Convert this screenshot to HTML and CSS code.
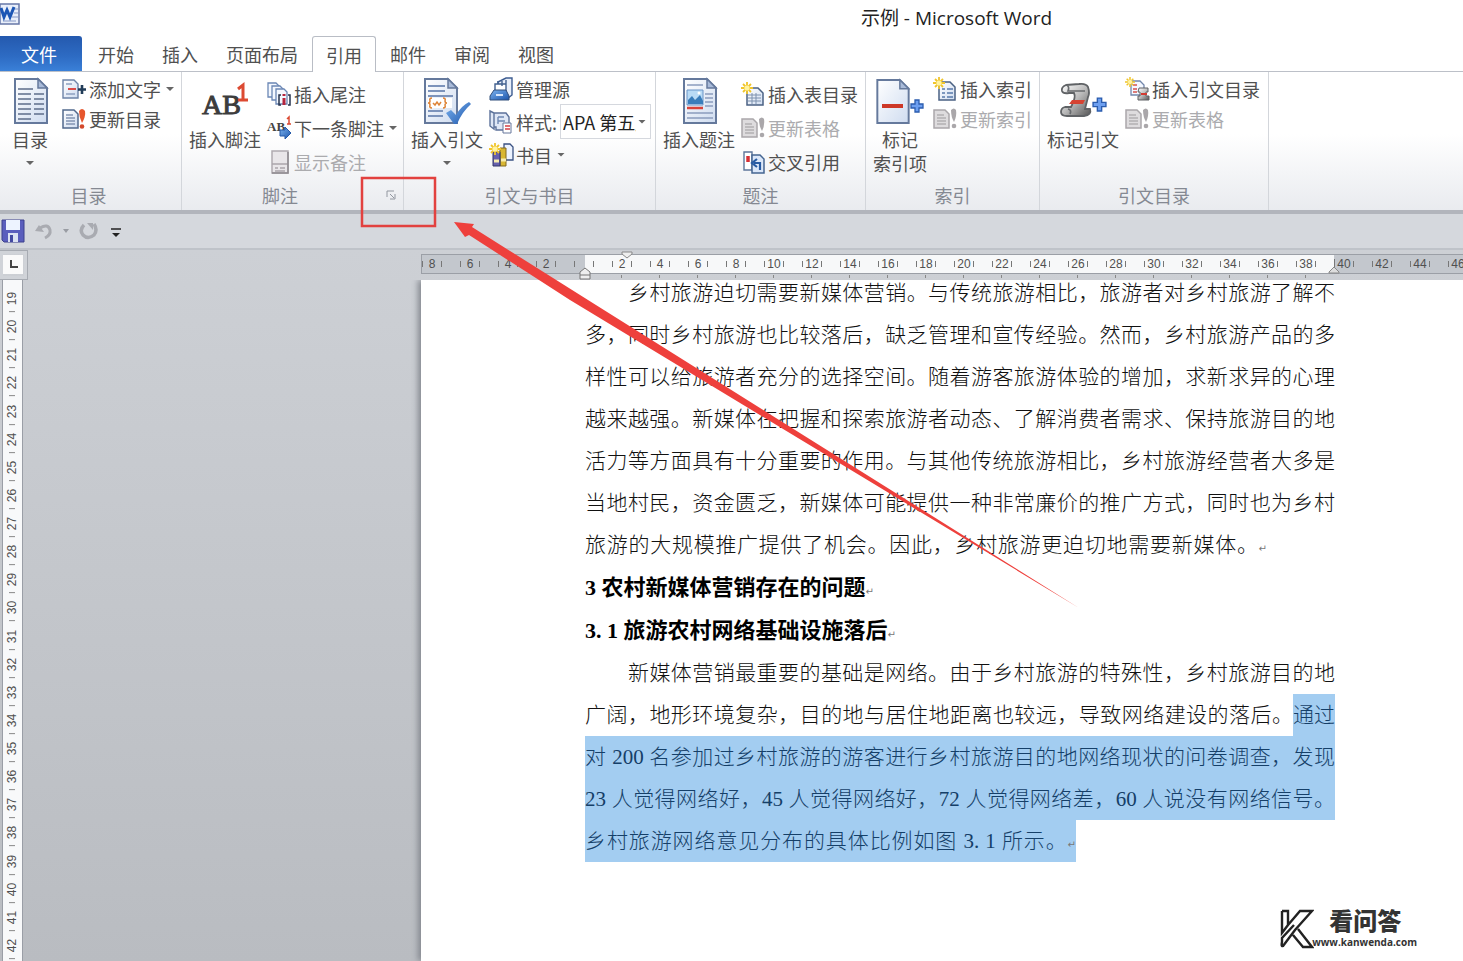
FILE: index.html
```
<!DOCTYPE html>
<html lang="zh-CN">
<head>
<meta charset="utf-8">
<title>示例 - Microsoft Word</title>
<link rel="stylesheet" href="styles.css">
</head>
<body>
<svg class="defs" width="0" height="0" aria-hidden="true">
  <defs>
    <linearGradient id="paper" x1="0" y1="0" x2="1" y2="1"><stop offset="0" stop-color="#fff"/><stop offset="1" stop-color="#cfdcf0"/></linearGradient>
    <linearGradient id="steel" x1="0" y1="0" x2="1" y2="1"><stop offset="0" stop-color="#fff"/><stop offset=".5" stop-color="#bbb"/><stop offset="1" stop-color="#555"/></linearGradient>
    <linearGradient id="blue" x1="0" y1="0" x2="1" y2="1"><stop offset="0" stop-color="#7db4f0"/><stop offset="1" stop-color="#1c55ab"/></linearGradient>
    <symbol id="page" viewBox="0 0 36 48"><path d="M2 2H25L34 11V46H2Z" fill="url(#paper)" stroke="#65799c" stroke-width="2"/><path d="M25 2V11H34Z" fill="#a9bbd9" stroke="#65799c" stroke-width="1.5"/></symbol>
    <symbol id="spark" viewBox="0 0 12 12"><path d="M6 0V12M0 6H12M2 2L10 10M10 2L2 10" stroke="#f0c52b" stroke-width="1.8"/><circle cx="6" cy="6" r="2.6" fill="#fff3a0"/></symbol>
    <symbol id="plus" viewBox="0 0 14 14"><path d="M5 1H9V5H13V9H9V13H5V9H1V5H5Z" fill="#6d9ff0" stroke="#2b5cae" stroke-width="1.3"/></symbol>
    <symbol id="update-off" viewBox="0 0 24 24"><path d="M1 3H12L16 7V21H1Z" fill="#dedcde" stroke="#aaa7aa" stroke-width="1.5"/><path d="M4 8H11M4 11H13M4 14H13M4 17H13" stroke="#b3b0b3" stroke-width="1.4"/><path d="M18 3Q21 0 23 3Q24 9 21 15Q18 10 18 3Z" fill="#aaa7aa"/><circle cx="21" cy="19" r="2.3" fill="#aaa7aa"/></symbol>
  </defs>
</svg>

<header class="titlebar">
  <svg class="app-icon" viewBox="0 0 21 22" aria-hidden="true"><path d="M0 1H19V21H0Z" fill="#e9effa" stroke="#6778a8" stroke-width="1.5"/><path d="M14 6H18M14 10H18M12 14H18M3 18H16" stroke="#a8b7d8" stroke-width="1.5"/><path d="M1 5L4 14L7 7L10 14L14 4" fill="none" stroke="#1d57b5" stroke-width="3"/></svg>
  <h1>示例 - Microsoft Word</h1>
</header>

<nav class="tabs" aria-label="功能区">
  <button class="tab tab-file">文件</button>
  <button class="tab">开始</button>
  <button class="tab">插入</button>
  <button class="tab">页面布局</button>
  <button class="tab tab-active">引用</button>
  <button class="tab">邮件</button>
  <button class="tab">审阅</button>
  <button class="tab">视图</button>
</nav>

<section class="ribbon">
  <div class="group g-toc">
    <div class="tools">
      <button class="big"><svg viewBox="0 0 48 48"><use href="#page" x="7" width="36" height="48"/><path d="M12 12H27M12 17H25M12 22H25M12 27H25M12 32H25M12 37H25M12 42H25M28 17H38M28 22H38M28 27H38M28 32H38M28 37H38" stroke="#5e6e8b" stroke-width="1.6"/></svg><span>目录</span><i class="caret"></i></button>
      <div class="stack rows-30">
        <button class="small"><svg viewBox="0 0 24 24"><path d="M1 3H12L16 7V21H1Z" fill="url(#paper)" stroke="#6e84a8" stroke-width="1.4"/><path d="M4 7H10M4 17H13" stroke="#8da0c0" stroke-width="1.3"/><path d="M6 12H14" stroke="#d83a35" stroke-width="1.8"/><path d="M20 8V17M16 12.500H24" stroke="#213c58" stroke-width="2.600"/></svg><span>添加文字</span><i class="caret"></i></button>
        <button class="small"><svg viewBox="0 0 24 24"><path d="M1 3H12L16 7V21H1Z" fill="url(#paper)" stroke="#52698d" stroke-width="1.5"/><path d="M4 8H11M4 11H13M4 14H13M4 17H13" stroke="#8294b2" stroke-width="1.3"/><path d="M17 4Q20 0 23 4Q24 9 20 16Q17 10 17 4Z" fill="#e6562d"/><circle cx="20" cy="19.500" r="2.300" fill="#d3482b"/></svg><span>更新目录</span></button>
      </div>
    </div>
    <h2>目录</h2>
  </div>

  <div class="group g-notes">
    <div class="tools">
      <button class="big"><svg viewBox="0 0 48 48"><text x="1" y="37" class="ico-ab">AB</text><path d="M37 12L42 8V23M37 23H47" fill="none" stroke="#dc4a32" stroke-width="3"/></svg><span>插入脚注</span></button>
      <div class="stack rows-34">
        <button class="small"><svg viewBox="0 0 24 24"><path d="M1 1H9L12 4V15H1Z" fill="#f4f8ff" stroke="#6b87b5" stroke-width="1.3"/><path d="M5 4H13L16 7V18H5Z" fill="#f4f8ff" stroke="#6b87b5" stroke-width="1.3"/><path d="M9 7H17L20 10V22H9Z" fill="#f4f8ff" stroke="#6b87b5" stroke-width="1.3"/><path d="M14 13H12V23H14M21 13H23V23H21" fill="none" stroke="#26334e" stroke-width="1.500"/><path d="M17 12V14M17 16V23" stroke="#b5243c" stroke-width="3"/></svg><span>插入尾注</span></button>
        <button class="small"><svg viewBox="0 0 24 24"><text x="0" y="15" class="ico-ab-s">AB</text><path d="M20 3L22 1V8M20 8H24" fill="none" stroke="#dc4a32" stroke-width="1.500"/><path d="M13 14H18V11L24 17L18 23V20H13Z" fill="url(#blue)" stroke="#2559a8"/></svg><span>下一条脚注</span><i class="caret"></i></button>
        <button class="small" disabled><svg viewBox="0 0 24 24"><path d="M5 1H21V23H5Z" fill="#e9e6e9" stroke="#b0abb0" stroke-width="1.500"/><path d="M5 14H21M8 18H11M13 18H18M8 21H18" stroke="#aaa5aa" stroke-width="1.500"/><path d="M21 2V23H5" fill="none" stroke="#8f8b90" stroke-width="1.500"/></svg><span>显示备注</span></button>
      </div>
    </div>
    <h2>脚注</h2>
    <button class="launcher" aria-label="脚注和尾注"><svg viewBox="0 0 10 10"><path d="M1 7V1H8" fill="none" stroke="#9297a0"/><path d="M4 4L8 8M9 4V9H4" fill="none" stroke="#9297a0"/></svg></button>
  </div>

  <div class="group g-cite">
    <div class="tools">
      <button class="big"><svg viewBox="0 0 48 48"><use href="#page" x="0" width="36" height="48"/><path d="M5 9H22M5 14H22M5 19H30M5 34H20M5 39H20M24 26H29" stroke="#7c93bb" stroke-width="1.800"/><path d="M5 21H29V31H5Z" fill="#fff"/><path d="M9 21Q6 21 7 24Q7 26 5 26Q7 26 7 28Q6 31 9 31M20 21Q23 21 22 24Q22 26 24 26Q22 26 22 28Q23 31 20 31M10 26L12 28L14 25L16 28L18 25" fill="none" stroke="#de8438" stroke-width="1.500"/><path d="M23 36L28 33L33 38Q38 29 46 25L48 27Q39 35 34 47L31 47Z" fill="url(#blue)"/></svg><span>插入引文</span><i class="caret"></i></button>
      <div class="stack rows-33">
        <button class="small"><svg viewBox="0 0 24 24"><path d="M9 5L17 1H23V18L18 22H9Z" fill="#e8effa" stroke="#3e5d91" stroke-width="1.400"/><path d="M6 7H17V16H6ZM9 4V7M13 4V9M17 3V9" fill="#fff" stroke="#40608f" stroke-width="1.400"/><path d="M1 19L5 13H17L20 19V23H1Z" fill="url(#blue)" stroke="#304e7b"/><path d="M7 18H14" stroke="#d9e7fa" stroke-width="2"/></svg><span>管理源</span></button>
        <div class="small"><svg viewBox="0 0 24 24"><path d="M1 1L5 3V19L1 16ZM5 3H17L20 7V20H7V17H5Z" fill="#dfe7f6" stroke="#5d729b" stroke-width="1.400"/><path d="M9 7H15M9 11H16M9 7V14" stroke="#6f88b3" stroke-width="1.400"/><path d="M14 13H22V23H14Z" fill="#fff" stroke="#66779b"/><path d="M16 16H21M16 19H21" stroke="#d53f45" stroke-width="1.500"/></svg><label for="style">样式:</label><span class="combo"><select id="style"><option>APA 第五版</option></select><i class="caret"></i></span></div>
        <button class="small"><svg viewBox="0 0 24 24"><path d="M15 1H21L24 4V17H15Z" fill="#edf3ff" stroke="#3a5282" stroke-width="1.300"/><path d="M11 5H17V23H11Z" fill="#d8b632" stroke="#806820"/><path d="M4 9H11V23H4Z" fill="#6761ad" stroke="#333768"/><path d="M5 18H10M12 17H17" stroke="#f8edae" stroke-width="3"/><use href="#spark" x="0" y="0" width="12" height="12"/></svg><span>书目</span><i class="caret"></i></button>
      </div>
    </div>
    <h2>引文与书目</h2>
  </div>

  <div class="group g-caption">
    <div class="tools">
      <button class="big"><svg viewBox="0 0 48 48"><use href="#page" x="7" width="36" height="48"/><path d="M12 8H28M12 36H38M12 41H38M30 17H38M30 21H38M30 25H38M30 29H38" stroke="#8a9cbd" stroke-width="1.600"/><path d="M12 13H28V28H12Z" fill="#b9dbf6" stroke="#6b95c7"/><path d="M13 27V23L17 19L20 23L25 18L28 24V27Z" fill="#397dbb"/><circle cx="24" cy="16" r="1.500" fill="#fff"/><path d="M12 31H28" stroke="#d8433a" stroke-width="2.500"/></svg><span>插入题注</span></button>
      <div class="stack rows-34">
        <button class="small"><svg viewBox="0 0 24 24"><path d="M6 6H17L22 11V23H6Z" fill="url(#paper)" stroke="#4b6284" stroke-width="1.500"/><path d="M7 13H20M7 16H20M7 19H20M11 11V22M15 11V22" stroke="#7c91ae"/><use href="#spark" width="12" height="12"/></svg><span>插入表目录</span></button>
        <button class="small" disabled><svg viewBox="0 0 24 24"><use href="#update-off" width="24" height="24"/></svg><span>更新表格</span></button>
        <button class="small"><svg viewBox="0 0 24 24"><path d="M3 2H11V20H3Z" fill="#fff" stroke="#5d769b" stroke-width="1.400"/><path d="M7 6V12" stroke="#d72f34" stroke-width="3.500"/><path d="M11 5H19L23 9V23H11Z" fill="#dbe7f9" stroke="#456591" stroke-width="1.500"/><path d="M19 20V13H13M16 9L11 13L16 17" fill="none" stroke="#285ba3" stroke-width="2.200"/></svg><span>交叉引用</span></button>
      </div>
    </div>
    <h2>题注</h2>
  </div>

  <div class="group g-index">
    <div class="tools">
      <button class="big"><svg viewBox="0 0 48 48"><use href="#page" x="-1" y="1" width="36" height="47"/><path d="M6 29H27" stroke="#cd3827" stroke-width="4"/><use href="#plus" x="34" y="22" width="14" height="14"/></svg><span>标记<br>索引项</span></button>
      <div class="stack rows-30">
        <button class="small"><svg viewBox="0 0 24 24"><path d="M6 5H17L22 10V23H6Z" fill="url(#paper)" stroke="#4b6284" stroke-width="1.500"/><path d="M9 12H12M14 12H20M9 16H12M14 16H20M9 20H12M14 20H20" stroke="#5879aa" stroke-width="1.500"/><use href="#spark" width="12" height="12"/></svg><span>插入索引</span></button>
        <button class="small" disabled><svg viewBox="0 0 24 24"><use href="#update-off" width="24" height="24"/></svg><span>更新索引</span></button>
      </div>
    </div>
    <h2>索引</h2>
  </div>

  <div class="group g-auth">
    <div class="tools">
      <button class="big"><svg viewBox="0 0 48 48"><path d="M7 8Q2 10 3 14Q4 17 10 16H15Q17 20 13 28L12 30H6Q2 31 2 35Q2 39 8 39H25Q33 38 31 32H26L29 20Q31 16 29 10Q27 6 20 7Z" fill="url(#steel)" stroke="#606366" stroke-width="1.800"/><path d="M7 8Q11 9 9 14H26M9 32Q13 33 11 37" fill="none" stroke="#686b6e" stroke-width="1.700"/><path d="M13 23H26L24 27H10Z" fill="#d64332"/><use href="#plus" x="33" y="20" width="15" height="15"/></svg><span>标记引文</span></button>
      <div class="stack rows-30">
        <button class="small"><svg viewBox="0 0 24 24"><path d="M6 4H15L19 8V18H6Z" fill="#f4f8ff" stroke="#7286ab" stroke-width="1.300"/><path d="M8 8H12M8 12H12M8 15H12" stroke="#d5524c" stroke-width="1.600"/><path d="M14 11H23V15H21V19H24V23H13V19H15V15H13Z" fill="url(#steel)" stroke="#5e6065"/><path d="M16 17H22" stroke="#d43a31" stroke-width="2"/><use href="#spark" width="10" height="10"/></svg><span>插入引文目录</span></button>
        <button class="small" disabled><svg viewBox="0 0 24 24"><use href="#update-off" width="24" height="24"/></svg><span>更新表格</span></button>
      </div>
    </div>
    <h2>引文目录</h2>
  </div>
</section>

<div class="quickbar">
  <button aria-label="保存"><svg width="24" height="24" viewBox="0 0 24 24"><path d="M1 1H23V23H3L1 21Z" fill="#5a5ebd" stroke="#3d418d"/><path d="M5 1H19V11H5Z" fill="#edf3ff"/><path d="M7 14H17V23H7Z" fill="#dbe1f2"/><path d="M9 16H12V23H9Z" fill="#4349a1"/></svg></button>
  <button aria-label="撤消" disabled><svg width="18" height="18" viewBox="0 0 18 18"><path d="M5 6Q13 1 15 8Q16 13 10 16" fill="none" stroke="#a9abb1" stroke-width="3"/><path d="M0 9L4 3L9 10Z" fill="#a9abb1"/></svg></button>
  <i class="caret faint"></i>
  <button aria-label="恢复" disabled><svg width="20" height="20" viewBox="0 0 20 20"><path d="M5 4Q0 9 4 14Q9 19 15 14Q19 9 15 3" fill="none" stroke="#a9abb1" stroke-width="3.500"/><path d="M8 2H14V9Z" fill="#a9abb1"/></svg></button>
  <button class="more" aria-label="自定义快速访问工具栏"><svg width="10" height="10" viewBox="0 0 10 10"><path d="M0 1H10" stroke="#222" stroke-width="1.500"/><path d="M1 5H9L5 9Z" fill="#222"/></svg></button>
</div>

<main class="workspace">
  <aside class="side">
    <button class="tabstop" aria-label="制表符"><svg width="9" height="9" viewBox="0 0 9 9"><path d="M2 0V7H9" fill="none" stroke="#444" stroke-width="2"/></svg></button>
    <ol class="vruler"><li>19</li><li>20</li><li>21</li><li>22</li><li>23</li><li>24</li><li>25</li><li>26</li><li>27</li><li>28</li><li>29</li><li>30</li><li>31</li><li>32</li><li>33</li><li>34</li><li>35</li><li>36</li><li>37</li><li>38</li><li>39</li><li>40</li><li>41</li><li>42</li></ol>
  </aside>
  <div class="canvas">
    <div class="hruler">
      <ol class="scale"><li>8</li><li>6</li><li>4</li><li>2</li><li class="zero"></li><li class="in">2</li><li class="in">4</li><li class="in">6</li><li class="in">8</li><li class="in">10</li><li class="in">12</li><li class="in">14</li><li class="in">16</li><li class="in">18</li><li class="in">20</li><li class="in">22</li><li class="in">24</li><li class="in">26</li><li class="in">28</li><li class="in">30</li><li class="in">32</li><li class="in">34</li><li class="in">36</li><li class="in">38</li><li class="end">40</li><li>42</li><li>44</li><li>46</li></ol>
      <div class="stops"></div>
      <svg class="marker first-line" viewBox="0 0 12 8"><path d="M1 1H11V3L6 7L1 3Z" fill="#eee" stroke="#888"/></svg>
      <svg class="marker hanging" viewBox="0 0 12 13"><path d="M1 12V5L6 1L11 5V12ZM1 8H11" fill="#eee" stroke="#777"/></svg>
      <svg class="marker right-indent" viewBox="0 0 12 8"><path d="M1 7V6L6 1L11 6V7Z" fill="#ddd" stroke="#888"/></svg>
    </div>
    <article class="page">
      <div class="text">
        <p><span class="line indent">乡村旅游迫切需要新媒体营销。与传统旅游相比，旅游者对乡村旅游了解不</span><span class="line">多，同时乡村旅游也比较落后，缺乏管理和宣传经验。然而，乡村旅游产品的多</span><span class="line">样性可以给旅游者充分的选择空间。随着游客旅游体验的增加，求新求异的心理</span><span class="line">越来越强。新媒体在把握和探索旅游者动态、了解消费者需求、保持旅游目的地</span><span class="line">活力等方面具有十分重要的作用。与其他传统旅游相比，乡村旅游经营者大多是</span><span class="line">当地村民，资金匮乏，新媒体可能提供一种非常廉价的推广方式，同时也为乡村</span><span class="line line-last">旅游的大规模推广提供了机会。因此，乡村旅游更迫切地需要新媒体。<b class="ret">↵</b></span></p>
        <h3>3 农村新媒体营销存在的问题<b class="ret">↵</b></h3>
        <h3>3. 1 旅游农村网络基础设施落后<b class="ret">↵</b></h3>
        <p><span class="line indent">新媒体营销最重要的基础是网络。由于乡村旅游的特殊性，乡村旅游目的地</span><span class="line split"><span>广阔，地形环境复杂，目的地与居住地距离也较远，导致网络建设的落后。</span><mark>通过</mark></span><mark class="line">对 200 名参加过乡村旅游的游客进行乡村旅游目的地网络现状的问卷调查，发现</mark><mark class="line">23 人觉得网络好，45 人觉得网络好，72 人觉得网络差，60 人说没有网络信号。</mark><mark class="line line-end">乡村旅游网络意见分布的具体比例如图 3. 1 所示。<b class="ret">↵</b></mark></p>
      </div>
    </article>
  </div>
</main>

<svg class="callout" width="740" height="440" viewBox="0 0 740 440" aria-hidden="true">
  <rect x="2" y="3" width="73" height="48" fill="none" stroke="#e2413f" stroke-width="2.500"/>
  <path d="M94 47L114 49L112 52L228 125L719 433L210 125L109 60L105 62Z" fill="#ee403c"/>
</svg>

<div class="watermark">
  <svg width="34" height="42" viewBox="0 0 34 42" aria-hidden="true"><path d="M2 3H8V17L20 3H32L15 22L3 38Q1 39 2 34V30L14 17M2 3V25L8 17M18 21L32 39H23L13 27" fill="none" stroke="#222" stroke-width="2.400"/></svg>
  <div><strong>看问答</strong><span>www.kanwenda.com</span></div>
</div>
</body>
</html>
```
FILE: styles.css
```
* { box-sizing: border-box; }

body {
  margin: 0;
  height: 100vh;
  display: flex;
  flex-direction: column;
  position: relative;
  overflow: hidden;
  background: #fff;
  color: #505050;
  font-family: "Noto Sans CJK SC", sans-serif;
  font-size: 18px;
  font-weight: 400;
}

button, select {
  font: inherit;
  color: inherit;
  background: none;
  border: 0;
  padding: 0;
  margin: 0;
}

h1, h2, h3, p, ol { margin: 0; padding: 0; font-weight: inherit; }
ol { list-style: none; }
.defs { position: absolute; }

/* Title bar */
.titlebar { flex: none; height: 36px; display: flex; align-items: center; }
.app-icon { width: 21px; height: 22px; align-self: flex-start; margin-top: 3px; }
.titlebar h1 {
  flex: 1;
  padding-left: 429px;
  text-align: center;
  font-size: 19px;
  line-height: 34px;
  font-weight: 400;
  color: #222;
  font-family: "Open Sans", "Noto Sans CJK SC", sans-serif;
}

/* Tabs */
.tabs { flex: none; height: 36px; display: flex; border-bottom: 1px solid #bcc0c8; }
.tab { height: 36px; padding: 0 14px; line-height: 34px; white-space: nowrap; }
.tab-file {
  width: 82px;
  height: 35px;
  padding: 0 4px 0 0;
  margin-right: 2px;
  color: #fff;
  border-radius: 0 3px 0 0;
  background: linear-gradient(#2459ae, #2e6cc4 60%, #3a80d8);
}
.tab-active {
  padding: 0 13px;
  line-height: 32px;
  border: 1px solid #b9bdc5;
  border-bottom: 0;
  border-radius: 3px 3px 0 0;
  background: #fff;
}

/* Ribbon */
.ribbon {
  flex: none;
  display: flex;
  height: 142px;
  border-bottom: 4px solid #b2b5bc;
  background: linear-gradient(#fff 45%, #e9ebef);
}
.group {
  flex: none;
  position: relative;
  display: flex;
  flex-direction: column;
  padding-left: 7px;
  border-right: 1px solid #d3d6db;
}
.g-toc { width: 182px; padding-left: 0; }
.g-notes { width: 222px; }
.g-cite { width: 252px; }
.g-caption { width: 210px; }
.g-index { width: 174px; }
.g-auth { width: 229px; }
.group h2 {
  height: 28px;
  line-height: 26px;
  padding-right: 20px;
  text-align: center;
  font-size: 18px;
  color: #858992;
}
.g-toc h2 { padding-right: 4px; }
.g-cite h2, .g-caption h2, .g-index h2, .g-auth h2 { padding-right: 7px; }
.g-notes h2 { padding-right: 32px; }
.tools { flex: 1; display: flex; gap: 6px; }
.g-toc .tools { gap: 2px; }
.big {
  width: 72px;
  display: flex;
  flex-direction: column;
  align-items: center;
  padding-top: 5px;
  line-height: 24px;
  white-space: nowrap;
}
.big svg { width: 48px; height: 48px; margin-bottom: 2px; }
.g-toc .big { width: 60px; }
.g-index .big { width: 54px; }
.big .caret { margin-top: 10px; }
.stack { display: flex; flex-direction: column; align-items: flex-start; }
.small { display: flex; align-items: center; gap: 3px; line-height: 28px; white-space: nowrap; }
.small svg { width: 24px; height: 24px; flex: none; overflow: visible; }
.small:disabled { color: #ababae; }
.rows-30 { padding-top: 2px; }
.rows-30 .small { height: 30px; }
.rows-33 { padding-top: 0; }
.rows-33 .small { height: 33px; }
.rows-34 { padding-top: 5px; }
.rows-34 .small { height: 34px; }
.caret {
  flex: none;
  width: 8px;
  height: 4px;
  margin-left: 2px;
  background: #666;
  clip-path: polygon(0 0, 100% 0, 50% 100%);
}
.big .caret { margin-left: 0; }
.faint { background: #999ca3; width: 6px; }
.combo {
  display: flex;
  align-items: center;
  width: 91px;
  height: 35px;
  padding-right: 4px;
  border: 1px solid #d5d8de;
  background: #fff;
  color: #222;
}
.combo select {
  flex: 1;
  width: 70px;
  min-width: 0;
  padding-left: 2px;
  appearance: none;
  overflow: hidden;
  text-overflow: clip;
}
.launcher { position: absolute; right: 7px; bottom: 10px; line-height: 0; }
.launcher svg { width: 10px; height: 10px; }
.ico-ab { font: 400 28px "Liberation Serif", serif; fill: #3c3c3c; stroke: #3c3c3c; stroke-width: 1px; }
.ico-ab-s { font: 700 13px "Liberation Serif", serif; fill: #444; }

/* Quick access bar */
.quickbar {
  flex: none;
  display: flex;
  align-items: center;
  height: 36px;
  gap: 10px;
  padding-left: 1px;
  background: #d5d8dd;
  border-bottom: 2px solid #bfc3c9;
}
.quickbar button { line-height: 0; }
.quickbar .caret { margin: 0; }
.quickbar .more { padding: 4px 0 0 2px; }

/* Workspace */
.workspace {
  flex: 1;
  min-height: 0;
  display: flex;
  background: linear-gradient(#cdd0d5, #b9bcc1);
}
.side { flex: none; width: 28px; display: flex; flex-direction: column; }
.tabstop {
  display: grid;
  place-items: center;
  height: 30px;
  width: 28px;
  padding: 4px 4px 5px 3px;
  border: 1px solid #a7abb2;
  border-left: 0;
  background: #fafafa content-box;
  box-shadow: inset 0 0 0 3px #d0d3d8;
}
.vruler {
  flex: 1;
  min-height: 0;
  display: flex;
  flex-direction: column;
  width: 21px;
  margin-left: 2px;
  padding: 4px 0 2px;
  background: #f8f9fa;
  border: solid #9a9ea6;
  border-width: 0 1px;
}
.vruler li {
  flex: 1;
  width: 19px;
  text-align: center;
  writing-mode: vertical-rl;
  transform: rotate(180deg);
  font: 12px/19px "Liberation Sans", sans-serif;
  background: linear-gradient(#888, #888) center top / 6px 1px no-repeat;
}
.canvas { flex: 1; min-width: 0; padding-left: 393px; display: flex; flex-direction: column; }
.hruler { flex: none; position: relative; height: 30px; padding-top: 4px; }
.scale {
  display: flex;
  height: 20px;
  overflow: hidden;
  background: #c3c7cd;
  border: solid #9b9fa6;
  border-width: 1px 0 1px 1px;
}
.scale li {
  flex: none;
  width: 38px;
  text-align: center;
  font: 12px/18px "Liberation Sans", sans-serif;
  background:
    linear-gradient(#777, #777) 9px center / 1px 6px no-repeat,
    linear-gradient(#777, #777) 28px center / 1px 6px no-repeat;
}
.scale li:first-child { margin-left: -9px; }
.scale .in { background-color: #f7f8f9; }
.scale .zero {
  background:
    linear-gradient(#777, #777) 9px center / 1px 6px no-repeat,
    linear-gradient(#777, #777) 28px center / 1px 6px no-repeat,
    linear-gradient(90deg, #c3c7cd 20px, #f7f8f9 20px);
}
.scale .end {
  background:
    linear-gradient(#777, #777) 9px center / 1px 10px no-repeat,
    linear-gradient(#777, #777) 28px center / 1px 6px no-repeat,
    linear-gradient(90deg, #f7f8f9 9px, #c3c7cd 9px);
}
.stops {
  width: 722px;
  height: 3px;
  margin: 1px 0 0 182px;
  background: repeating-linear-gradient(90deg, transparent 0 18px, #888 18px 19px, transparent 19px 38px);
}
.marker { position: absolute; width: 12px; }
.first-line { left: 200px; top: 1px; height: 8px; }
.hanging { left: 158px; top: 17px; height: 13px; }
.right-indent { left: 907px; top: 16px; height: 8px; }

.page {
  flex: 1;
  min-height: 0;
  overflow: hidden;
  background: #fff;
  box-shadow: -3px 0 6px #858990;
  clip-path: inset(0 0 0 -12px);
}
.text {
  width: 750px;
  margin: -8px 0 0 164px;
  color: #111;
  font-family: "Liberation Serif", "Noto Sans CJK SC", serif;
  font-size: 21px;
  line-height: 42px;
  font-weight: 300;
}
.text p, .text h3 { margin-bottom: 1px; }
.text h3 { font-size: 22px; font-weight: 700; color: #000; }
.text h3 + h3 { margin-bottom: 0; }
.line {
  display: block;
  height: 42px;
  white-space: nowrap;
  text-align: justify;
  text-align-last: justify;
}
.indent { padding-left: 43px; }
.line-last { width: 682px; }
.line-end { width: 491px; }
.split { display: flex; }
.split span { flex: 1; }
mark { color: #153f68; background: #a3cdf1; }
.ret { font: 400 10px "DejaVu Sans", sans-serif; color: #777; }

/* Overlays */
.callout { position: absolute; left: 360px; top: 175px; pointer-events: none; }
.watermark {
  position: absolute;
  right: 46px;
  bottom: 11px;
  display: flex;
  align-items: flex-end;
  color: #333;
}
.watermark div { display: flex; flex-direction: column; margin-left: -2px; }
.watermark strong { padding-left: 17px; font-size: 24px; line-height: 30px; font-weight: 900; }
.watermark span { font: 700 10px/14px "Open Sans", sans-serif; padding-bottom: 1px; }
```
